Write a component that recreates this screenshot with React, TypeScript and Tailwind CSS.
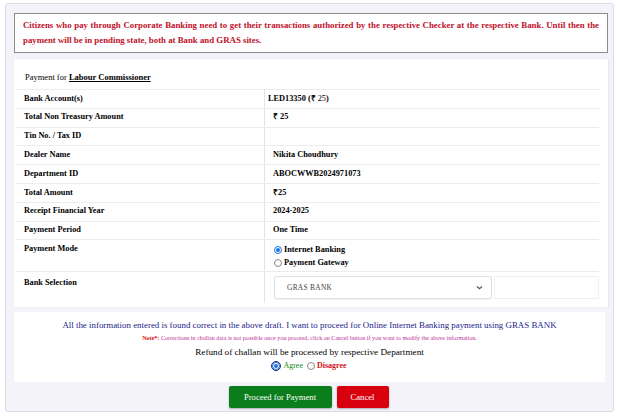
import React from "react";

const rows: { label: string; value: React.ReactNode }[] = [
  { label: "Bank Account(s)", value: <span className="-ml-[5px]">LED13350 (₹ <span className="font-normal">25</span>)</span> },
  { label: "Total Non Treasury Amount", value: "₹ 25" },
  { label: "Tin No. / Tax ID", value: "" },
  { label: "Dealer Name", value: "Nikita Choudhury" },
  { label: "Department ID", value: "ABOCWWB2024971073" },
  { label: "Total Amount", value: "₹25" },
  { label: "Receipt Financial Year", value: "2024-2025" },
  { label: "Payment Period", value: "One Time" },
];

function Radio({ checked, ring }: { checked?: boolean; ring?: boolean }) {
  return (
    <span
      className={
        "inline-flex items-center justify-center w-[8px] h-[8px] rounded-full border " +
        (checked ? "border-[#1a73e8] bg-white" : "border-[#888] bg-white") +
        (ring ? " outline-[1.5px] outline-solid outline-[#1a2a6c]" : "")
      }
    >
      {checked ? <span className="w-[4px] h-[4px] rounded-full bg-[#1a73e8]" /> : null}
    </span>
  );
}

export default function App() {
  return (
    <div className="w-[621px] h-[418px] bg-white [font-family:'Liberation_Serif','Times_New_Roman',serif] text-black overflow-hidden">
      <div className="ml-[5px] mr-[7px] mt-[3px] h-[409px] border border-[#dcdce8] bg-[#f3f3f9] rounded-[3px] pl-[8px] pr-[5px] pt-[9px]">
        {/* Warning */}
        <div className="h-[40px] border border-[#8c8c8c] bg-white px-[8px] pt-[4px] text-[8.8px] leading-[15px] font-bold text-[#c0102a] text-justify">
          Citizens who pay through Corporate Banking need to get their transactions authorized by the respective Checker at the respective Bank. Until then the
          payment will be in pending state, both at Bank and GRAS sites.
        </div>

        {/* Main panel */}
        <div className="mt-[6px] bg-white pl-[2px] pr-[9px] pt-[6px] pb-[4px] shadow-[1px_0_2px_rgba(0,0,0,0.06)]">
          <div className="h-[24px] flex items-center pl-[9px] text-[8.5px]">
            Payment for&nbsp;<span className="font-bold underline">Labour Commissioner</span>
          </div>
          <div className="text-[8.3px] font-bold">
            {rows.map((r) => (
              <div key={r.label} className="flex h-[18.8px] border-t border-[#ececf0]">
                <div className="w-[249px] shrink-0 pl-[8px] flex items-center border-r border-[#e2e2e8]">{r.label}</div>
                <div className="flex-1 pl-[8px] flex items-center">{r.value}</div>
              </div>
            ))}
            <div className="flex h-[32px] border-t border-[#ececf0]">
              <div className="w-[249px] shrink-0 pl-[8px] pt-[3px] border-r border-[#e2e2e8]">Payment Mode</div>
              <div className="flex-1 pl-[9px] pt-[5px] flex flex-col gap-[4px]">
                <div className="flex items-center gap-[2px] leading-[9px]">
                  <Radio checked />
                  <span>Internet Banking</span>
                </div>
                <div className="flex items-center gap-[2px] leading-[9px]">
                  <Radio />
                  <span>Payment Gateway</span>
                </div>
              </div>
            </div>
            <div className="flex h-[32px] border-t border-[#ececf0]">
              <div className="w-[249px] shrink-0 pl-[8px] pt-[5px] border-r border-[#e2e2e8]">Bank Selection</div>
              <div className="flex-1 pl-[9px] pt-[4px] flex">
                <div className="w-[218px] h-[23px] border border-[#e0e0e6] rounded-[2px] flex items-center justify-between pl-[12px] pr-[8px] font-normal text-[7.4px] tracking-[0.3px] text-[#444] shadow-[0_1px_1px_rgba(0,0,0,0.05)]">
                  <span>GRAS BANK</span>
                  <svg width="7" height="5" viewBox="0 0 7 5">
                    <path d="M1 1.5 L3.5 3.8 L6 1.5" stroke="#555" strokeWidth="1.2" fill="none" />
                  </svg>
                </div>
                <div className="flex-1 ml-[2px] border border-[#f0f0f4] h-[23px]" />
              </div>
            </div>
          </div>
        </div>

        {/* Agreement box */}
        <div className="mt-[5px] mr-[3px] h-[70px] bg-white flex flex-col items-center pt-[8px]">
          <div className="text-[8.9px] text-[#1c1c8c] leading-[10px]">
            All the information entered is found correct in the above draft. I want to proceed for Online Internet Banking payment using GRAS BANK
          </div>
          <div className="mt-[4px] text-[6.1px] leading-[8px] text-[#c0309a]">
            <span className="text-[#e0101e] font-bold">Note*:</span> Corrections in challan data is not possible once you proceed, click on Cancel button if you want to modify the above information.
          </div>
          <div className="mt-[4px] text-[9.2px] leading-[12px]">Refund of challan will be processed by respective Department</div>
          <div className="mt-[3px] flex items-center text-[8px] leading-[10px] gap-[2px]">
            <Radio checked ring />
            <span className="text-[#118a11] ml-[1px]">Agree</span>
            <span className="ml-[2px] flex"><Radio /></span>
            <span className="text-[#d4101c] font-bold">Disagree</span>
          </div>
        </div>

        {/* Buttons */}
        <div className="mt-[4px] flex justify-center gap-[5px] pr-[5px]">
          <button className="w-[103px] h-[22px] bg-[#0b7d1a] rounded-[2px] text-white text-[8.6px] shadow-[0_1px_2px_rgba(0,0,0,0.3)]">
            Proceed for Payment
          </button>
          <button className="w-[52px] h-[22px] bg-[#d8000c] rounded-[2px] text-white text-[8.6px] shadow-[0_1px_2px_rgba(0,0,0,0.3)]">
            Cancel
          </button>
        </div>
      </div>
    </div>
  );
}
